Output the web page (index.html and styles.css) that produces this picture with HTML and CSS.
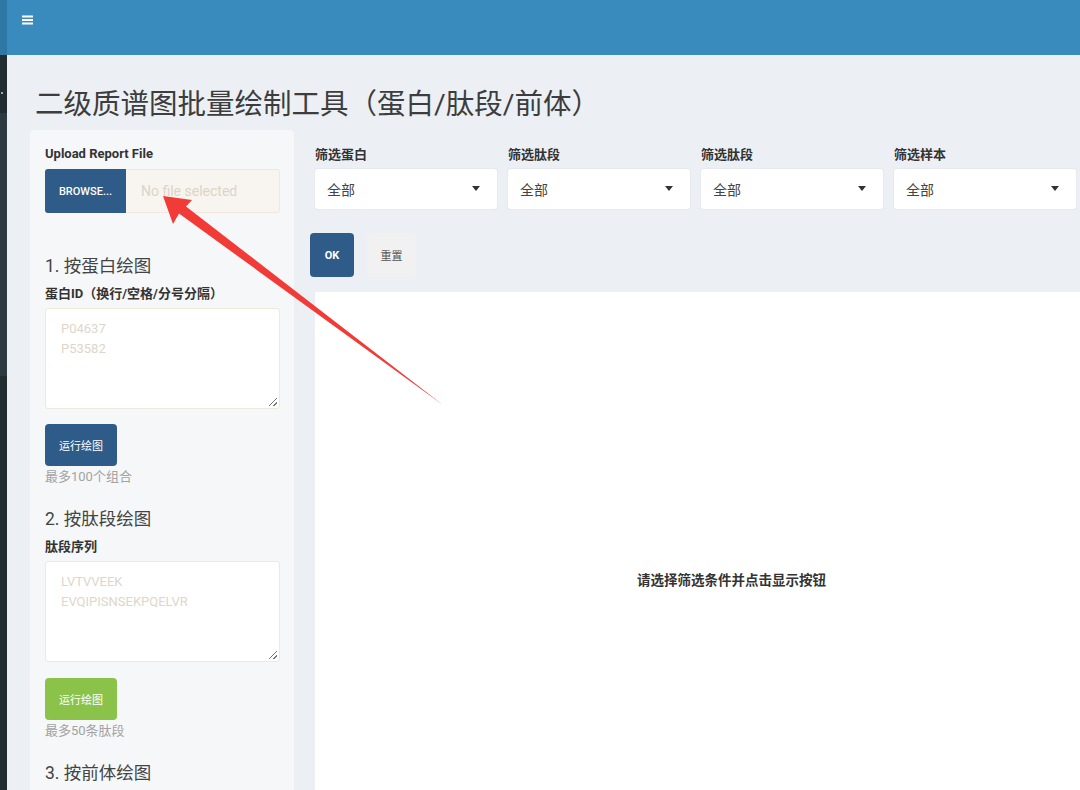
FILE: index.html
```html
<!DOCTYPE html>
<html lang="zh">
<head>
<meta charset="utf-8">
<title>二级质谱图批量绘制工具</title>
<link rel="stylesheet" href="styles.css">
</head>
<body>
<div class="app">
  <aside class="strip">
    <div class="strip-top"></div>
    <div class="strip-a"><span class="dot"></span></div>
    <div class="strip-b"></div>
    <div class="strip-c"></div>
  </aside>
  <div class="page">
    <header class="topbar">
      <svg class="burger" width="11" height="10" viewBox="0 0 11 10"><rect x="0" y="0.5" width="11" height="2" fill="#fff"/><rect x="0" y="4" width="11" height="2" fill="#fff"/><rect x="0" y="7.5" width="11" height="2" fill="#fff"/></svg>
    </header>
    <main class="content">
      <h1 class="title">二级质谱图批量绘制工具（蛋白/肽段/前体）</h1>
      <div class="layout">
        <section class="well">
          <label class="lbl">Upload Report File</label>
          <div class="file-group">
            <span class="browse">BROWSE...</span>
            <span class="file-name">No file selected</span>
          </div>

          <h3 class="sec sec-first">1. 按蛋白绘图</h3>
          <label class="lbl">蛋白ID（换行/空格/分号分隔）</label>
          <div class="textarea"><span class="ph">P04637<br>P53582</span><span class="grip"></span></div>
          <button class="btn btn-blue">运行绘图</button>
          <p class="help">最多100个组合</p>

          <h3 class="sec">2. 按肽段绘图</h3>
          <label class="lbl">肽段序列</label>
          <div class="textarea"><span class="ph">LVTVVEEK<br>EVQIPISNSEKPQELVR</span><span class="grip"></span></div>
          <button class="btn btn-green">运行绘图</button>
          <p class="help">最多50条肽段</p>

          <h3 class="sec">3. 按前体绘图</h3>
        </section>

        <section class="main">
          <div class="filters">
            <div class="filter"><label class="lbl">筛选蛋白</label><div class="select">全部<span class="caret"></span></div></div>
            <div class="filter"><label class="lbl">筛选肽段</label><div class="select">全部<span class="caret"></span></div></div>
            <div class="filter"><label class="lbl">筛选肽段</label><div class="select">全部<span class="caret"></span></div></div>
            <div class="filter"><label class="lbl">筛选样本</label><div class="select">全部<span class="caret"></span></div></div>
          </div>
          <div class="actions">
            <button class="btn btn-ok">OK</button>
            <button class="btn btn-reset">重置</button>
          </div>
          <div class="plot">
            <span class="plot-msg">请选择筛选条件并点击显示按钮</span>
          </div>
        </section>
      </div>
    </main>
  </div>
</div>
<svg class="arrow" width="1080" height="790" viewBox="0 0 1080 790">
  <polygon points="163,196 192,200 186,206.5 443,405 179,213.5 173,224" fill="#f23a37"/>
</svg>
</body>
</html>
```
FILE: styles.css
```css
* { box-sizing: border-box; }
html, body { margin: 0; padding: 0; }
body {
  width: 1080px;
  height: 790px;
  overflow: hidden;
  position: relative;
  font-family: "Roboto", "Noto Sans CJK SC", sans-serif;
  color: #333;
  background: #ecf0f5;
}
.app { display: flex; height: 790px; }
.strip { width: 7px; flex: none; display: flex; flex-direction: column; }
.strip-top { height: 55px; flex: none; background: #2f77a5; }
.strip-a { height: 58px; flex: none; background: #222d32; position: relative; }
.dot { position: absolute; left: 1px; top: 37px; width: 2px; height: 2px; background: #9aa7ad; }
.strip-b { height: 263px; flex: none; background: #2c3b41; }
.strip-c { flex: 1; background: #222d32; }

.page { flex: 1; display: flex; flex-direction: column; min-width: 0; overflow: hidden; }
.topbar {
  flex: none;
  height: 55px;
  background: #3a8bbd;
  display: flex;
  align-items: flex-start;
  padding: 15px 0 0 15px;
}
.burger { display: block; }

.content { flex: none; padding: 33px 0 0 23px; }
.title {
  margin: 0 0 9px 5px;
  font-size: 28.5px;
  line-height: 33px;
  font-weight: 400;
  color: #3d3d3d;
  white-space: nowrap;
}
.layout { display: flex; align-items: flex-start; }

.well {
  width: 264px;
  flex: none;
  background: #f5f7f9;
  border-radius: 4px;
  padding: 15px 14px 0 15px;
  height: 700px;
}
.lbl {
  display: block;
  font-size: 13px;
  line-height: 18px;
  font-weight: 700;
  color: #333;
  white-space: nowrap;
}
.file-group {
  display: flex;
  height: 44px;
  margin-top: 6px;
}
.browse {
  width: 81px;
  background: #2e5b88;
  color: #fff;
  font-size: 11px;
  font-weight: 500;
  display: flex;
  align-items: center;
  justify-content: center;
  border-radius: 3px 0 0 3px;
}
.file-name {
  flex: 1;
  background: #f8f5f0;
  border: 1px solid #efe8dd;
  border-left: none;
  border-radius: 0 3px 3px 0;
  color: #ddd4c7;
  font-size: 14px;
  display: flex;
  align-items: center;
  padding-left: 15px;
}
.sec {
  margin: 23px 0 9px;
  font-size: 17.5px;
  line-height: 20px;
  font-weight: 400;
  color: #444;
}
.sec-first { margin-top: 43px; }
.textarea {
  position: relative;
  height: 101px;
  margin-top: 5px;
  background: #fff;
  border: 1px solid #efe8dd;
  border-radius: 3px;
  padding: 10px 15px;
}
.ph {
  display: block;
  color: #ded6ca;
  font-size: 13px;
  line-height: 20px;
}
.grip {
  position: absolute;
  right: 2px;
  bottom: 2px;
  width: 8px;
  height: 8px;
  background: linear-gradient(135deg, transparent 45%, #777 45%, #777 55%, transparent 55%, transparent 75%, #777 75%, #777 85%, transparent 85%);
}
.btn {
  display: block;
  border: none;
  font-family: inherit;
  font-size: 11px;
  color: #fff;
  border-radius: 4px;
  padding: 0;
}
.btn-blue, .btn-green { width: 72px; height: 42px; margin-top: 15px; }
.btn-blue { background: #2e5b88; }
.btn-green { background: #8bc34a; margin-top: 16px; }
.help {
  margin: 2px 0 0;
  font-size: 13px;
  line-height: 18px;
  color: #a3a3a3;
}

.main { flex: none; width: 860px; margin-left: 6px; padding-top: 16px; }
.filters {
  display: grid;
  grid-template-columns: repeat(4, 182px);
  column-gap: 11px;
  padding-left: 15px;
}
.select {
  position: relative;
  margin-top: 5px;
  height: 40px;
  background: #fff;
  border-radius: 3px;
  box-shadow: 0 0 0 1px #e6e9ee;
  font-size: 14px;
  color: #444;
  display: flex;
  align-items: center;
  padding-left: 12px;
}
.caret {
  position: absolute;
  right: 17px;
  top: 17px;
  width: 0;
  height: 0;
  border-left: 4.5px solid transparent;
  border-right: 4.5px solid transparent;
  border-top: 5px solid #333;
}
.actions {
  display: flex;
  gap: 13px;
  margin-top: 24px;
  padding-left: 10px;
}
.btn-ok {
  width: 44px;
  height: 44px;
  background: #2e5b88;
  font-weight: 700;
}
.btn-reset {
  width: 49px;
  height: 44px;
  background: #f1f1f1;
  color: #555;
}
.plot {
  margin: 15px 0 0 15px;
  width: 833px;
  height: 520px;
  background: #fff;
  display: flex;
  align-items: center;
  justify-content: center;
}
.plot-msg {
  font-size: 13.5px;
  font-weight: 700;
  color: #333;
  margin-top: 54px;
}

.arrow {
  position: absolute;
  left: 0;
  top: 0;
  pointer-events: none;
}
```
